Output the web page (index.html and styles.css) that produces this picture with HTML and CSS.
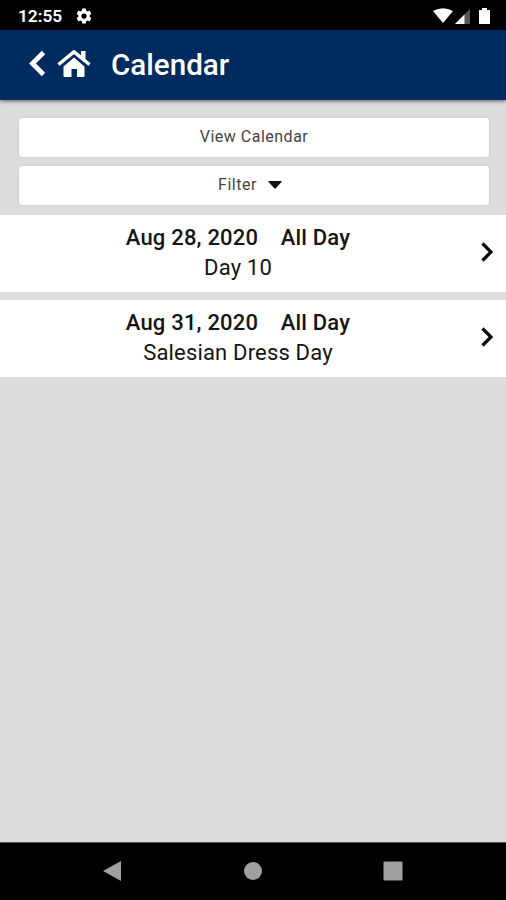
FILE: index.html
```html
<!DOCTYPE html>
<html lang="en">
<head>
<meta charset="utf-8">
<title>Calendar</title>
<link rel="stylesheet" href="styles.css">
</head>
<body>
<div class="status">
  <span class="clock">12:55</span>
  <svg class="gear" width="18" height="18" viewBox="0 0 24 24"><path d="M19.43 12.98c.04-.32.07-.64.07-.98s-.03-.66-.07-.98l2.11-1.65c.19-.15.24-.42.12-.64l-2-3.46c-.12-.22-.39-.3-.61-.22l-2.49 1c-.52-.4-1.08-.73-1.69-.98l-.38-2.65C14.46 2.18 14.25 2 14 2h-4c-.25 0-.46.18-.49.42l-.38 2.65c-.61.25-1.17.59-1.69.98l-2.49-1c-.23-.09-.49 0-.61.22l-2 3.46c-.13.22-.07.49.12.64l2.11 1.65c-.04.32-.07.65-.07.98s.03.66.07.98l-2.11 1.65c-.19.15-.24.42-.12.64l2 3.46c.12.22.39.3.61.22l2.49-1c.52.4 1.08.73 1.69.98l.38 2.65c.03.24.24.42.49.42h4c.25 0 .46-.18.49-.42l.38-2.65c.61-.25 1.17-.59 1.69-.98l2.49 1c.23.09.49 0 .61-.22l2-3.46c.12-.22.07-.49-.12-.64zM12 15.5A3.5 3.5 0 1 1 12 8.500a3.500 3.500 0 0 1 0 7z"/></svg>
  <svg class="signals" width="60" height="18" viewBox="0 0 60 18"><path d="M0 4Q10-1.500 20 4L10 16Z"/><path d="M22 17 37 2V17Z" fill="#555"/><path d="M22 17 31.500 7.500V17Z"/><path d="M46 3h3V1h5v2h3v14H46Z"/></svg>
</div>
<header class="header">
  <svg class="back" width="18" height="28" viewBox="0 0 18 28"><path d="M15.500 2.500 4.500 13.500 15.500 24.500"/></svg>
  <svg class="home" width="34" height="28" viewBox="0 0 34 28"><path d="M17 7.500 27.500 16.500V26Q27.500 27 26.500 27H20V19H14.500V27H7.500Q6.500 27 6.500 26V16.500Z"/><path d="M24 1H28.500V12L24 8Z"/><path class="roof" d="M1.500 14.500 17 1.800 32.500 14.500"/></svg>
  <h1 class="title">Calendar</h1>
</header>
<main class="content">
  <div class="actions">
    <button class="button"><span>View Calendar</span></button>
    <button class="button filter"><span>Filter</span><svg width="14" height="8" viewBox="0 0 14 8"><path d="M1 0H13Q14 0 13.500 1L7.500 7.500H6.500L.5 1Q0 0 1 0Z"/></svg></button>
  </div>
  <section class="event">
    <div class="details"><div class="when"><span>Aug 28, 2020</span><span>All Day</span></div><div class="name">Day 10</div></div>
    <svg class="next" width="14" height="20" viewBox="0 0 14 20"><path d="M2.500 1.500 11 10 2.500 18.500"/></svg>
  </section>
  <section class="event">
    <div class="details"><div class="when"><span>Aug 31, 2020</span><span>All Day</span></div><div class="name">Salesian Dress Day</div></div>
    <svg class="next" width="14" height="20" viewBox="0 0 14 20"><path d="M2.500 1.500 11 10 2.500 18.500"/></svg>
  </section>
</main>
<nav class="navbar">
  <svg width="20" height="22" viewBox="0 0 20 22"><path d="M1 11 19 1V21Z"/></svg>
  <svg width="20" height="20" viewBox="0 0 20 20"><circle cx="10" cy="10" r="9"/></svg>
  <svg width="20" height="20" viewBox="0 0 20 20"><rect x=".5" y=".5" width="19" height="19" rx="1"/></svg>
</nav>
</body>
</html>
```
FILE: styles.css
```css
* { box-sizing: border-box; }
body { margin: 0; height: 900px; display: flex; flex-direction: column; overflow: hidden; background: #dcdcdc; color: #151515; font-family: Roboto, "Liberation Sans", sans-serif; }
svg { display: block; flex: none; }
.status { height: 30px; padding: 1px 13px 0 18px; display: flex; align-items: center; background: #000; color: #fff; }
.clock { width: 57px; padding-top: 1px; font-size: 17.3px; font-weight: 600; }
.gear, .signals { fill: #fff; }
.signals { margin-left: auto; }
.header { height: 70px; flex: none; padding: 0 0 2px 28px; display: flex; align-items: center; background: #002b5f; border-bottom: 1px solid #173250; box-shadow: 0 1px 4px rgba(0,0,0,.6); color: #fff; }
.back { fill: none; stroke: #fff; stroke-width: 4.8; }
.home { margin-left: 11px; fill: #fff; }
.roof { fill: none; stroke: #fff; stroke-width: 3.5; }
.title { margin: 0 0 0 20px; padding-top: 2px; font-size: 29.6px; font-weight: 500; }
.content { flex: 1; padding-top: 18px; }
.actions { display: grid; gap: 9px; padding: 0 17px 10px 19px; }
.button { height: 39px; padding: 0 0 2px; display: flex; align-items: center; justify-content: center; border: 0; border-radius: 3px; background: #fff; box-shadow: 0 0 2px #bbb; color: #444; font: 400 16px Roboto, sans-serif; letter-spacing: .5px; }
.filter { gap: 11px; padding-right: 8px; }
.filter svg { fill: #111; }
.event { height: 77px; margin-bottom: 8px; padding-right: 12px; display: flex; align-items: center; background: #fff; }
.details { flex: 1; padding: 0 4px 1px 0; text-align: center; font-size: 22px; line-height: 30px; }
.when { display: flex; justify-content: center; gap: 22.500px; font-weight: 500; letter-spacing: .2px; }
.name { letter-spacing: .17px; }
.next { fill: none; stroke: #090909; stroke-width: 3.2; margin-bottom: 3px; }
.navbar { height: 58px; padding: 0 103px 2px 102px; display: flex; align-items: center; justify-content: space-between; background: #000; border-top: 1px solid #555; fill: #a0a0a0; }
```
